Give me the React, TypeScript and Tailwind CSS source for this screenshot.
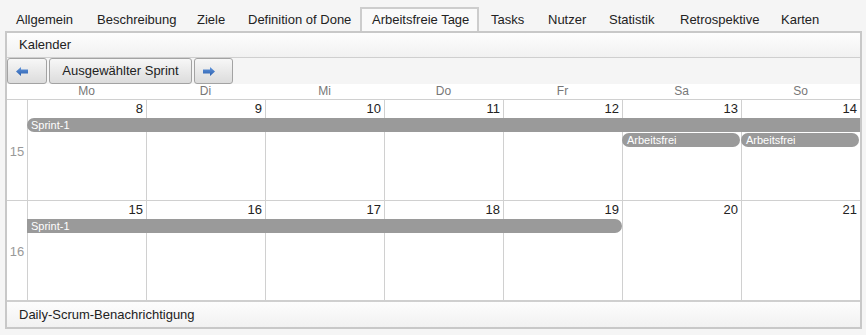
import React from "react";

const tabs = [
  { label: "Allgemein", w: "w-[81px]" },
  { label: "Beschreibung", w: "w-[100px]" },
  { label: "Ziele", w: "w-[51px]" },
  { label: "Definition of Done", w: "w-[124px]" },
  { label: "Arbeitsfreie Tage", w: "w-[119px]", active: true },
  { label: "Tasks", w: "w-[57px]" },
  { label: "Nutzer", w: "w-[61px]" },
  { label: "Statistik", w: "w-[71px]" },
  { label: "Retrospektive", w: "w-[101px]" },
  { label: "Karten", w: "w-[70px]" },
];

const days = ["Mo", "Di", "Mi", "Do", "Fr", "Sa", "So"];

const colStart = [
  "col-start-2",
  "col-start-3",
  "col-start-4",
  "col-start-5",
  "col-start-6",
  "col-start-7",
  "col-start-8",
];

function Arrow({ dir }: { dir: "left" | "right" }) {
  return (
    <svg width="12" height="9" viewBox="0 0 12 9">
      <defs>
        <linearGradient id={`ag-${dir}`} x1="0" y1="0" x2="0" y2="1">
          <stop offset="0" stopColor="#6396dc" />
          <stop offset="1" stopColor="#2a5fae" />
        </linearGradient>
      </defs>
      {dir === "left" ? (
        <path d="M0 4.5 L5 0 L5 2.5 L12 2.5 L12 6.5 L5 6.5 L5 9 Z" fill={`url(#ag-${dir})`} />
      ) : (
        <path d="M12 4.5 L7 0 L7 2.5 L0 2.5 L0 6.5 L7 6.5 L7 9 Z" fill={`url(#ag-${dir})`} />
      )}
    </svg>
  );
}

function Week({
  num,
  dates,
  last,
}: {
  num: number;
  dates: number[];
  last?: boolean;
}) {
  return (
    <div
      className={`grid grid-cols-[20px_repeat(7,minmax(0,1fr))] grid-rows-[18px_14px_1px_14px_1fr] border-t border-[#d0d0d0] ${
        last ? "h-[99px]" : "h-[100px]"
      } box-content`}
    >
      <div className="col-start-1 row-start-1 row-span-5 flex items-center justify-center pt-[3px] text-[13px] text-[#999]">
        {num}
      </div>
      {dates.map((d, i) => (
        <div
          key={d}
          className={`${colStart[i]} row-start-1 row-span-5 border-l border-[#d0d0d0] bg-white text-right pr-[3px] text-[13px] leading-[18px] text-[#222]`}
        >
          {d}
        </div>
      ))}
      {!last ? (
        <>
          <div className="col-start-2 col-span-7 row-start-2 z-10 bg-[#9a9a9a] rounded-l-[7px] text-white text-[11px] leading-[14px] pl-[4px]">
            Sprint-1
          </div>
          <div className="col-start-7 row-start-4 z-10 mr-[1px] bg-[#9a9a9a] rounded-[7px] text-white text-[11px] leading-[14px] pl-[5px]">
            Arbeitsfrei
          </div>
          <div className="col-start-8 row-start-4 z-10 mr-[1px] bg-[#9a9a9a] rounded-[7px] text-white text-[11px] leading-[14px] pl-[5px]">
            Arbeitsfrei
          </div>
        </>
      ) : (
        <div className="col-start-2 col-span-5 row-start-2 z-10 bg-[#9a9a9a] rounded-r-[7px] text-white text-[11px] leading-[14px] pl-[4px]">
          Sprint-1
        </div>
      )}
    </div>
  );
}

export default function App() {
  return (
    <div
      className="w-[866px] h-[335px] bg-[#f5f5f5] overflow-hidden"
      style={{ fontFamily: '"Liberation Sans", Arial, sans-serif' }}
    >
      {/* Tabs */}
      <div className="flex items-end h-[31px] pl-[4px] pt-[7px]">
        {tabs.map((t) => (
          <div
            key={t.label}
            className={`${t.w} h-[24px] shrink-0 text-left pl-[10px] whitespace-nowrap text-[13px] leading-[22px] text-[#222] border-2 border-b-0 ${
              t.active ? "border-[#cdcdcd] bg-[#fafafa]" : "border-transparent"
            }`}
          >
            {t.label}
          </div>
        ))}
      </div>

      {/* Panel */}
      <div className="ml-[5px] w-[857px] border-2 border-[#c8c8c8] bg-white">
        <div className="h-[25px] border-b border-[#cfcfcf] bg-gradient-to-b from-[#fdfdfd] to-[#f1f1f1] pl-[12px] text-[13px] leading-[24px] text-[#222]">
          Kalender
        </div>
        <div className="h-[26px] bg-[#f5f5f5] flex gap-[2px]">
          <button className="w-[40px] h-[26px] border border-[#a3a3a3] rounded-[3px] bg-gradient-to-b from-[#f7f7f7] to-[#dcdcdc] flex items-center pl-[8px]">
            <Arrow dir="left" />
          </button>
          <button className="w-[143px] h-[26px] border border-[#a3a3a3] rounded-[3px] bg-gradient-to-b from-[#f7f7f7] to-[#dcdcdc] text-[13px] text-[#222] leading-[24px]">
            Ausgewählter Sprint
          </button>
          <button className="w-[39px] h-[26px] border border-[#a3a3a3] rounded-[3px] bg-gradient-to-b from-[#f7f7f7] to-[#dcdcdc] flex items-center pl-[8px]">
            <Arrow dir="right" />
          </button>
        </div>
        <div className="grid grid-cols-[20px_repeat(7,minmax(0,1fr))] h-[15px] bg-white text-[12px] leading-[15px] text-[#777]">
          <div />
          {days.map((d) => (
            <div key={d} className="text-center">
              {d}
            </div>
          ))}
        </div>
        <Week num={15} dates={[8, 9, 10, 11, 12, 13, 14]} />
        <Week num={16} dates={[15, 16, 17, 18, 19, 20, 21]} last />
        <div className="h-[27px] border-t-2 border-[#cfcfcf] bg-gradient-to-b from-[#fdfdfd] to-[#f1f1f1] pl-[12px] text-[13px] leading-[25px] text-[#222]">
          Daily-Scrum-Benachrichtigung
        </div>
      </div>
    </div>
  );
}
